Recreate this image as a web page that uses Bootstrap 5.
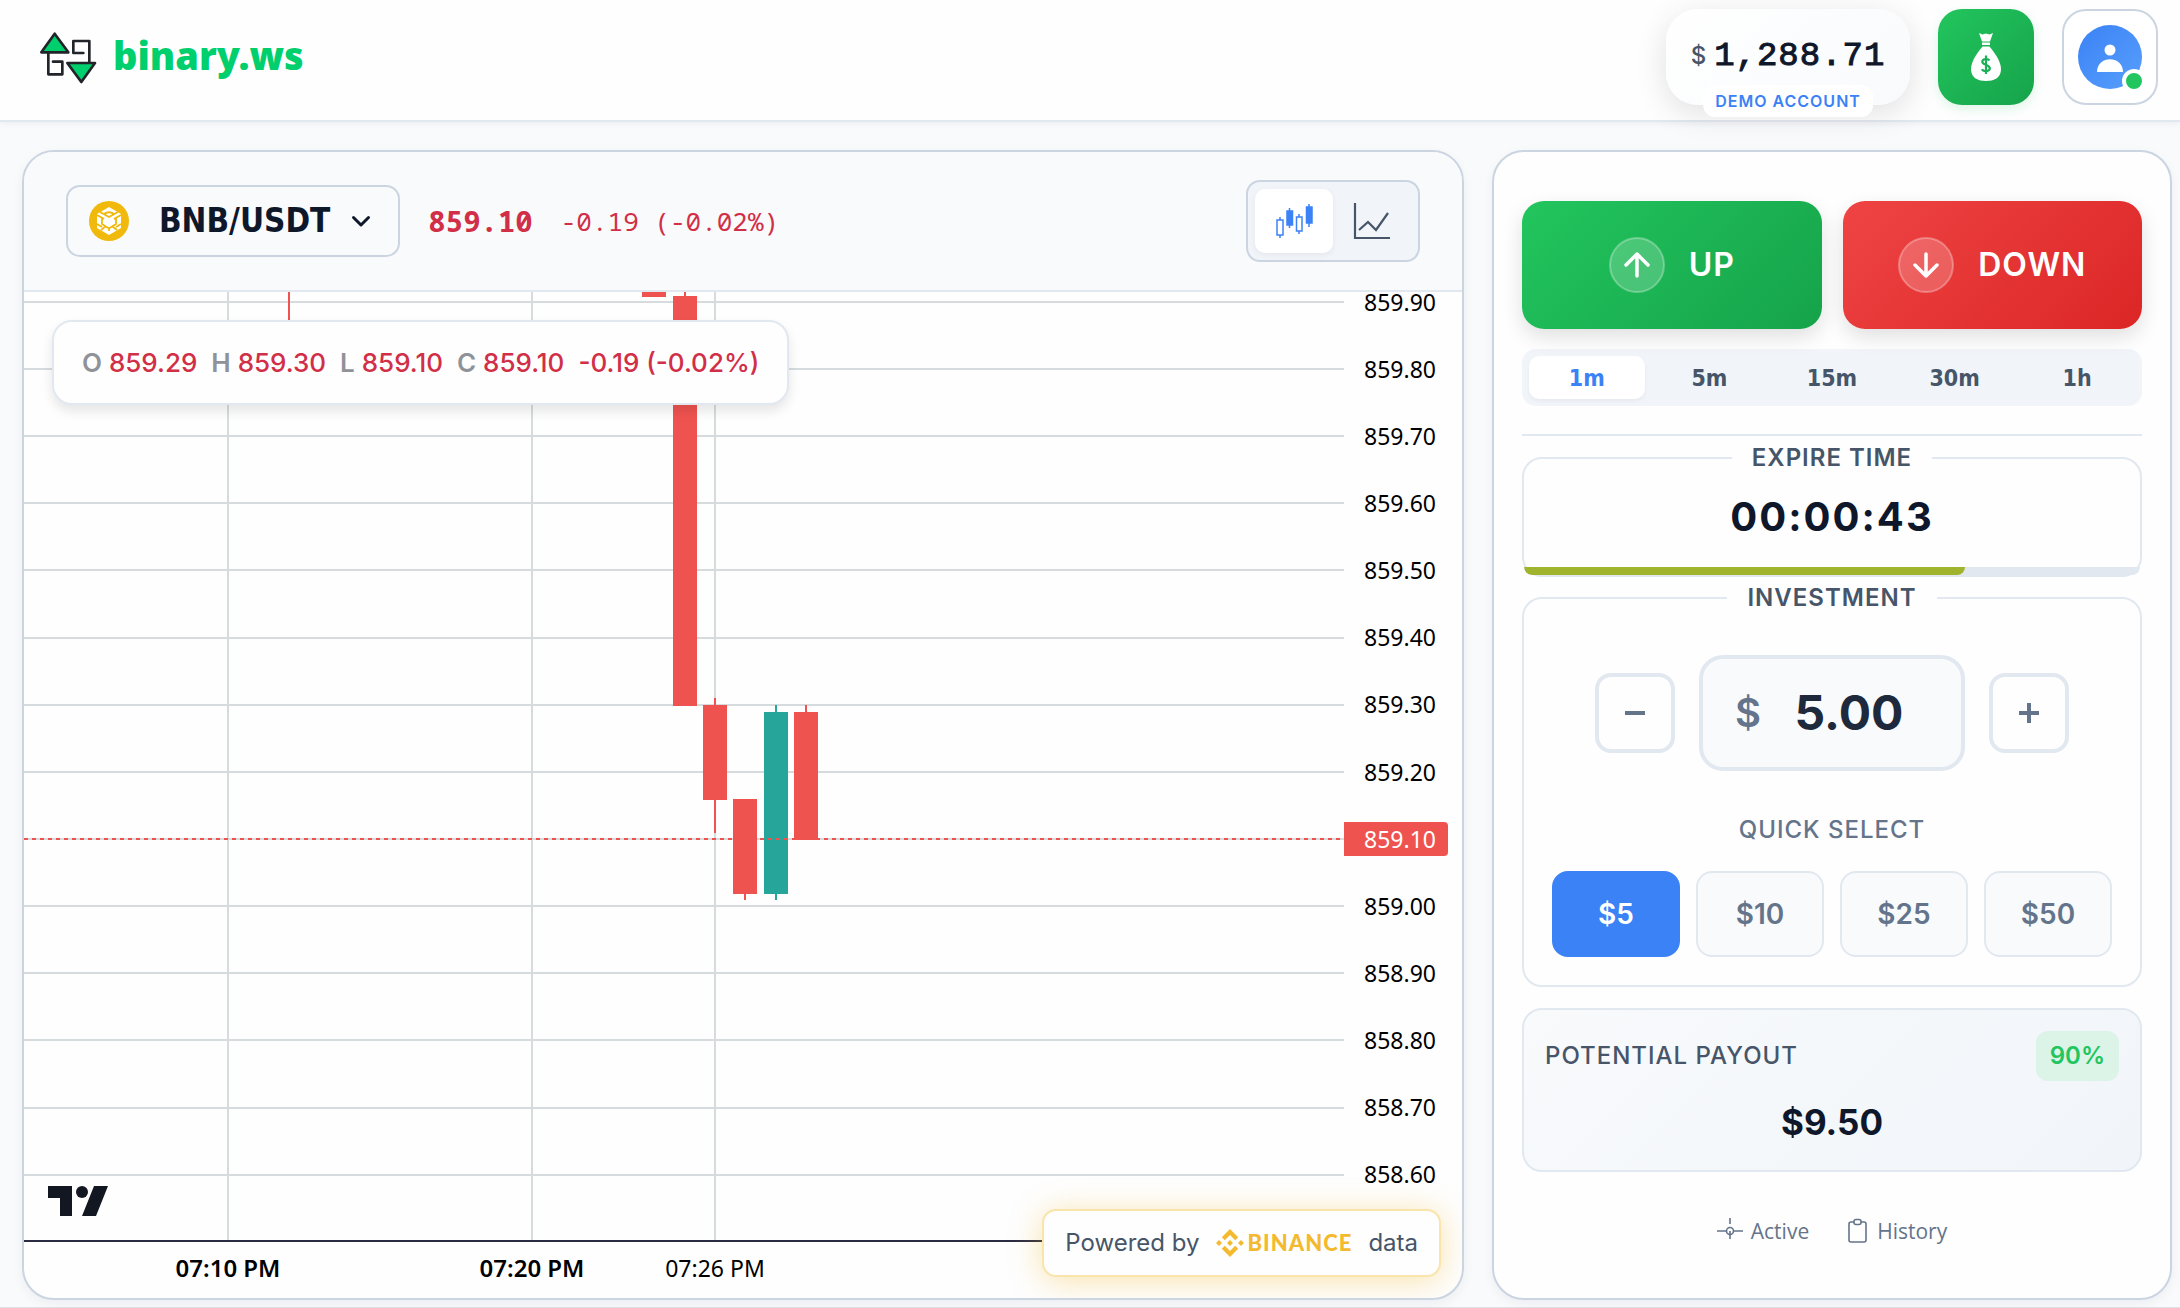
<!DOCTYPE html>
<html lang="en">
<head>
<meta charset="utf-8">
<meta name="viewport" content="width=device-width, initial-scale=1">
<title>binary.ws</title>
<link href="https://cdn.jsdelivr.net/npm/bootstrap@5.3.0/dist/css/bootstrap.min.css" rel="stylesheet">
<style>
:root{--line:#e2e8f0;--edge:#cbd5e1;--ink:#0f172a;--slate:#475569;--muted:#64748b;--blue:#3b82f6;--loss:#d12f47}
body{background:#f8fafc;color:var(--ink);font-family:Inter,sans-serif;font-size:24px;line-height:30px}
svg{display:block;flex:none}
button{font-family:inherit}
.f-tab{font-family:"DejaVu Sans Condensed","Noto Sans",sans-serif}
.topbar{background:#fefefe;border-bottom:2px solid var(--line);box-shadow:0 2px 6px rgba(15,23,42,.05);padding:9px 22px 15px 40px}
.brand{gap:16px;color:#00cf6e;font:900 38px/48px "Noto Sans",sans-serif;text-decoration:none}
.brand span{padding-bottom:4px}
.tools{gap:28px}
.balance{width:244px;height:96px;border-radius:32px;background:linear-gradient(135deg,#fff,#f8fafc);box-shadow:0 8px 32px rgba(0,0,0,.12);padding-bottom:2px;gap:8px}
.balance .cur{font-weight:500;color:var(--slate)}
.balance .amt{font:400 34px/40px "Liberation Mono",monospace;letter-spacing:1px;-webkit-text-stroke:1px var(--ink)}
.demo{bottom:-12px;left:50%;transform:translateX(-50%);background:#fff;border-radius:12px;color:var(--blue);font-weight:600;font-size:16px;line-height:32px;padding:0 12px;letter-spacing:1px;white-space:nowrap}
.sq{width:96px;height:96px;border-radius:24px;padding:0}
.sq.cash{border:0;background:linear-gradient(135deg,#22c55e,#16a34a);box-shadow:0 4px 12px rgba(34,197,94,.15)}
.sq.user{border:2px solid var(--edge);background:#fff}
.main{padding:28px 8px 7px 22px;gap:28px}
.pane{border:2px solid var(--edge);border-radius:32px;background:#fefefe;box-shadow:0 4px 12px rgba(15,23,42,.05)}
.chartpane{overflow:hidden;min-width:0}
.chead{background:#f8fafc;border-bottom:2px solid var(--line);padding:28px 42px}
.chead-left{gap:28px}
.pair{height:72px;border:2px solid var(--edge);border-radius:14px;background:#f8fafc;padding:0 27px 0 20px;font-size:33px;font-weight:700;color:var(--ink)}
.pair span{margin:0 21px 0 29px}
.quote{color:var(--loss);gap:28px;font-family:"Noto Sans Mono","DejaVu Sans Mono",monospace;font-size:26px}
.quote strong{font-size:29px}
.kinds{border:2px solid var(--edge);border-radius:14px;background:#f1f5f9;padding:7px}
.kinds button{width:78px;height:64px;border:0;border-radius:10px;background:transparent;padding:0}
.kinds .on{background:#fff;box-shadow:0 2px 6px rgba(0,0,0,.06)}
.legendbox{left:28px;top:28px;border:2px solid var(--line);border-radius:20px;background:#fefefe;box-shadow:0 6px 12px rgba(0,0,0,.1);padding:26px 28px 25px;gap:14px;font-weight:500;font-size:26px;color:var(--loss);white-space:nowrap}
.legendbox i{font-style:normal;font-weight:600;color:#8f9299}
.powered{right:21px;bottom:21px;height:68px;border:2px solid #f9e4ac;border-radius:14px;background:#fefefe;box-shadow:0 4px 32px rgba(240,175,20,.35);padding:0 21px;color:var(--slate);white-space:nowrap}
.powered b{font:900 22px/30px Lato,sans-serif;letter-spacing:1px;color:#f3ba2f}
.axis{overflow:visible}
.axis text{font:23px "Noto Sans",sans-serif}
.axis .hr{font-size:24px;font-weight:600}
.side{width:680px;flex:none;padding:49px 28px 49px}
.calls{gap:21px}
.call{height:128px;border:0;border-radius:22px;color:#fff;font-weight:600;font-size:32px;gap:24px;flex:1 1 0;letter-spacing:1px;box-shadow:0 8px 20px rgba(0,0,0,.12)}
.call.up{background:linear-gradient(135deg,#22c55e,#16a34a)}
.call.dn{background:linear-gradient(135deg,#ef4444,#dc2626)}
.spans{margin-top:20px;background:#f1f5f9;border-radius:14px;padding:7px;gap:7px}
.spans button{flex:1 1 0;height:43px;border:0;border-radius:10px;background:transparent;color:var(--slate);font-weight:700;font-size:23px;padding:0}
.spans .on{background:#fff;color:var(--blue);box-shadow:0 2px 4px rgba(0,0,0,.05)}
.rule{height:2px;background:var(--line);margin:28px 0 7px}
fieldset.fs{border:2px solid var(--line);border-radius:20px;margin:0;min-width:0}
.fs legend{float:none;width:auto;margin:0 auto;padding:0 20px;font-size:24px;line-height:30px;font-weight:600;color:var(--slate);letter-spacing:1px}
.timer{font-size:40px;line-height:48px;font-weight:700;letter-spacing:2px;text-align:center;margin:20px 0 26px}
.left-bar{height:8px;border-radius:0 0 8px 8px;background:var(--line)}
.left-bar .progress-bar{background:#9fb42c;border-radius:0 0 8px 8px}
.fs.invest{padding:0 28px 28px;margin-top:6px}
.stepper{gap:24px;margin-top:42px}
.step{width:80px;height:80px;border:4px solid var(--line);border-radius:16px;background:#fefefe;padding:0;color:var(--muted)}
.money{width:266px;height:116px;border:4px solid var(--line);border-radius:24px;background:#f8fafc;padding:0 32px}
.money label{font-size:40px;font-weight:600;color:var(--muted)}
.money input{border:0;background:transparent;font-size:48px;line-height:60px;font-weight:700;color:#1e293b;width:100%;min-width:0;text-align:center;padding:0 0 0 8px}
.quick{color:var(--muted);letter-spacing:1px;font-weight:500;margin:44px 0 26px}
.amts{gap:16px}
.amts button{flex:1 1 0;height:86px;border:2px solid var(--line);border-radius:16px;background:#f8fafc;color:var(--muted);font-weight:600;font-size:28px;padding:0}
.amts .on{background:var(--blue);border-color:var(--blue);color:#fff}
.payout{margin-top:21px;border:2px solid var(--line);border-radius:20px;background:linear-gradient(135deg,#f8fafc,#f1f5f9);padding:21px 21px 25px}
.payout .cap{letter-spacing:1px;font-weight:500;color:var(--slate)}
.pct{background:#dcf3e7;color:#22c55e;font-weight:600;border-radius:12px;line-height:50px;padding:0 14px}
.win{font-size:35px;line-height:46px;font-weight:700;margin-top:18px}
.links{margin-top:44px;gap:38px;font-family:"Open Sans",sans-serif}
.links a{color:var(--muted);text-decoration:none;gap:8px;font-size:21px}
.foot{border-top:1px solid #dfe1e4}
</style>
<script src="https://cdn.jsdelivr.net/npm/bootstrap@5.3.0/dist/js/bootstrap.bundle.min.js"></script>
</head>
<body>
<header class="topbar d-flex align-items-center justify-content-between">
  <a class="brand d-flex align-items-center" href="#">
    <svg width="57" height="53" viewBox="60 60 171 159" fill="none" stroke="#212529" stroke-width="8" stroke-linejoin="round" stroke-linecap="round">
      <path d="M85 126V190H127V152H99M208 155V90H160V126H190"/>
      <path fill="#00cf6e" d="M104 68L145 124H64Z M184 213L142 156H225Z"/>
    </svg>
    <span>binary.ws</span>
  </a>
  <div class="tools d-flex align-items-center">
    <div class="balance position-relative d-flex align-items-center justify-content-center">
      <span class="cur">$</span><span class="amt">1,288.71</span>
      <span class="demo position-absolute">DEMO ACCOUNT</span>
    </div>
    <button class="sq cash d-flex align-items-center justify-content-center" type="button" aria-label="Deposit">
      <svg width="30" height="48" viewBox="0 0 30 48" fill="#fff">
        <path d="M8 0L11.500 1.500L15 .5L18.500 1.500L22 0L19 8.500H11Z"/><path d="M11 9.500H19V12H11Z"/>
        <path d="M11.500 13.500H18.500C23 19 30 28 30 36C30 45 23 48 15 48S0 45 0 36C0 28 7 19 11.500 13.500Z"/>
        <path d="M18.500 27.500C17.500 25.500 11.300 25.300 11.300 28.800C11.300 32.300 18.800 31.300 18.800 35.300C18.800 39 12 38.800 11 36.200M15 22.500V41" fill="none" stroke="#1bb055" stroke-width="2.200"/>
      </svg>
    </button>
    <button class="sq user d-flex align-items-center justify-content-center" type="button" aria-label="Profile">
      <svg width="72" height="72" viewBox="-36 -36 72 72">
        <defs><linearGradient id="av" x1="0" y1="0" x2="1" y2="1"><stop offset="0" stop-color="#3b82f6"/><stop offset="1" stop-color="#579ffb"/></linearGradient></defs>
        <circle r="32" fill="url(#av)"/><circle cy="-7" r="5.500" fill="#fff"/><path fill="#fff" d="M-13 15C-13 -2 13 -2 13 15Z"/>
        <circle cx="24" cy="24" r="10" fill="#22c55e" stroke="#fff" stroke-width="4"/>
      </svg>
    </button>
  </div>
</header>

<main class="main d-flex align-items-stretch">
  <section class="pane chartpane flex-fill d-flex flex-column">
    <div class="chead d-flex align-items-center justify-content-between">
      <div class="chead-left d-flex align-items-center">
        <button class="pair f-tab d-flex align-items-center" type="button">
          <svg width="42" height="42" viewBox="0 0 42 42"><circle cx="21" cy="21" r="20" fill="#f0b90b"/>
            <path fill="#fff" d="M21 7L33 14V28L21 35L9 28V14Z"/>
            <path d="M9 15L16 19M33 15L26 19M12 12L21 17L30 12M16 14.500C18 11.500 24 11.500 26 14.500M14 17V24L21 28.500L28 24V17M9 24L14 27M33 24L28 27M21 28V31M13 30L18 26M29 30L24 26" fill="none" stroke="#f0b90b" stroke-width="1.800"/></svg>
          <span>BNB/USDT</span>
          <svg width="20" height="20" viewBox="0 0 20 20" fill="none" stroke="#0f172a" stroke-width="3" stroke-linecap="round" stroke-linejoin="round"><path d="M2.500 6.500L10 14L17.500 6.500"/></svg>
        </button>
        <div class="quote d-flex align-items-center"><strong>859.10</strong><span>-0.19 (-0.02%)</span></div>
      </div>
      <div class="kinds d-flex">
        <button class="on d-flex align-items-center justify-content-center" type="button" aria-label="Candles">
          <svg width="38" height="36" viewBox="0 0 38 36" fill="none" stroke="#3b82f6" stroke-width="1.500"><path d="M2 17H8V32H2ZM5 14V17M5 32V35M21.500 14H27V28H21.500ZM24 11V14M24 28V31M14.500 5V25M34 1V24"/><path fill="#3b82f6" d="M12 8H17.500V22H12ZM31.500 4H37V20H31.500Z"/></svg>
        </button>
        <button class="d-flex align-items-center justify-content-center" type="button" aria-label="Line">
          <svg width="38" height="38" viewBox="0 0 38 38" fill="none" stroke="#475569" stroke-width="2.200"><path d="M2 1V36H37M6 28L15 20L23 28L35 11"/></svg>
        </button>
      </div>
    </div>
    <div class="position-relative">
      <svg class="w-100 axis" viewBox="0 0 1438 1006">
        <g stroke="#d6dcde" stroke-width="2" fill="none" shape-rendering="crispEdges">
          <path d="M0 10H1320M0 77H1320M0 144H1320M0 211H1320M0 278H1320M0 346H1320M0 413H1320M0 480H1320M0 547H1320M0 614H1320M0 681H1320M0 748H1320M0 816H1320M0 883H1320"/>
          <path d="M204 0V948M508 0V948M691 0V948"/>
        </g>
        <g fill="#ef5350" shape-rendering="crispEdges">
          <path d="M264 0h2v60h-2zM618 0h24v5h-24zM660 0h2v10h-2zM649 4h24v410h-24zM679 413h24v95h-24zM690 406h2v135h-2zM709 507h24v95h-24zM720 600h2v8h-2zM770 420h24v128h-24zM781 413h2v8h-2z"/>
          <path fill="#26a69a" d="M740 420h24v182h-24zM751 413h2v195h-2z"/>
        </g>
        <path d="M0 547H1320" stroke="#ef5350" stroke-width="2" stroke-dasharray="4 4"/>
        <path d="M0 949H1320" stroke="#2b2b43" stroke-width="2"/>
        <g>
          <text x="1340" y="19">859.90</text><text x="1340" y="86">859.80</text><text x="1340" y="153">859.70</text><text x="1340" y="220">859.60</text><text x="1340" y="287">859.50</text><text x="1340" y="354">859.40</text><text x="1340" y="421">859.30</text><text x="1340" y="489">859.20</text><text x="1340" y="623">859.00</text><text x="1340" y="690">858.90</text><text x="1340" y="757">858.80</text><text x="1340" y="824">858.70</text><text x="1340" y="891">858.60</text>
        </g>
        <path d="M1320 530H1420Q1424 530 1424 534V560Q1424 564 1420 564H1320Z" fill="#ef5350"/>
        <text x="1340" y="556" fill="#fff">859.10</text>
        <g text-anchor="middle"><text class="hr" x="204" y="985">07:10 PM</text><text class="hr" x="508" y="985">07:20 PM</text><text x="691" y="985">07:26 PM</text></g>
        <path fill="#131722" d="M24 894H48V924H36V906H24Z M70 894H84L72 924H58Z"/><circle cx="58" cy="900" r="6" fill="#131722"/>
      </svg>
      <div class="legendbox position-absolute d-flex">
        <span><i>O</i> 859.29</span><span><i>H</i> 859.30</span><span><i>L</i> 859.10</span><span><i>C</i> 859.10</span><span>-0.19 (-0.02%)</span>
      </div>
      <div class="powered position-absolute d-flex align-items-center">
        <span>Powered by</span>
        <svg class="ms-3 me-1" width="28" height="28" viewBox="0 0 28 28" fill="#f3ba2f"><path d="M14 0L22.200 8.200L19.200 11.200L14 6L8.800 11.200L5.800 8.200ZM14 28L5.800 19.800L8.800 16.800L14 22L19.200 16.800L22.200 19.800ZM3 11L6 14L3 17L0 14ZM25 11L28 14L25 17L22 14ZM14 11L17 14L14 17L11 14Z"/></svg>
        <b class="me-3">BINANCE</b>
        <span>data</span>
      </div>
    </div>
  </section>

  <aside class="pane side">
    <div class="calls d-flex">
      <button class="call up d-flex align-items-center justify-content-center" type="button">
        <svg width="56" height="56" viewBox="0 0 56 56" fill="none" stroke="#fff"><circle cx="28" cy="28" r="27" fill="#fff" fill-opacity=".2" stroke-opacity=".3" stroke-width="2"/><path stroke-width="3.500" stroke-linecap="round" stroke-linejoin="round" d="M28 39V17M17 28L28 17L39 28"/></svg>UP</button>
      <button class="call dn d-flex align-items-center justify-content-center" type="button">
        <svg width="56" height="56" viewBox="0 0 56 56" fill="none" stroke="#fff"><circle cx="28" cy="28" r="27" fill="#fff" fill-opacity=".2" stroke-opacity=".3" stroke-width="2"/><path stroke-width="3.500" stroke-linecap="round" stroke-linejoin="round" d="M28 17V39M17 28L28 39L39 28"/></svg>DOWN</button>
    </div>
    <div class="spans f-tab d-flex">
      <button class="on" type="button">1m</button><button type="button">5m</button><button type="button">15m</button><button type="button">30m</button><button type="button">1h</button>
    </div>
    <div class="rule"></div>
    <fieldset class="fs">
      <legend>EXPIRE TIME</legend>
      <div class="timer">00:00:43</div>
      <div class="progress left-bar"><div class="progress-bar" style="width:71.67%"></div></div>
    </fieldset>
    <fieldset class="fs invest">
      <legend>INVESTMENT</legend>
      <div class="stepper d-flex align-items-center justify-content-center">
        <button class="step d-flex align-items-center justify-content-center" type="button" aria-label="Less"><svg width="20" height="20" stroke="#64748b" stroke-width="4"><path d="M0 10H20"/></svg></button>
        <div class="money d-flex align-items-center"><label for="amt">$</label><input id="amt" type="text" value="5.00"></div>
        <button class="step d-flex align-items-center justify-content-center" type="button" aria-label="More"><svg width="20" height="20" stroke="#64748b" stroke-width="4"><path d="M0 10H20M10 0V20"/></svg></button>
      </div>
      <div class="quick text-center">QUICK SELECT</div>
      <div class="amts d-flex"><button class="on" type="button">$5</button><button type="button">$10</button><button type="button">$25</button><button type="button">$50</button></div>
    </fieldset>
    <div class="payout">
      <div class="d-flex justify-content-between align-items-center"><span class="cap">POTENTIAL PAYOUT</span><span class="pct">90%</span></div>
      <div class="win text-center">$9.50</div>
    </div>
    <nav class="links d-flex justify-content-center">
      <a class="d-flex align-items-center" href="#"><svg width="26" height="26" viewBox="0 0 26 26" fill="none" stroke="#64748b" stroke-width="1.600"><circle cx="13" cy="13" r="3.500"/><path d="M0 13H9.500M16.500 13H26M13 0V6M13 13V21"/></svg>Active</a>
      <a class="d-flex align-items-center" href="#"><svg width="22" height="26" viewBox="0 0 22 26" fill="none" stroke="#64748b" stroke-width="1.600"><rect x="2" y="4" width="17" height="20" rx="2"/><rect x="7" y="1.500" width="7" height="5" rx="2" fill="#fefefe"/></svg>History</a>
    </nav>
  </aside>
</main>
<footer class="foot"></footer>
</body>
</html>
